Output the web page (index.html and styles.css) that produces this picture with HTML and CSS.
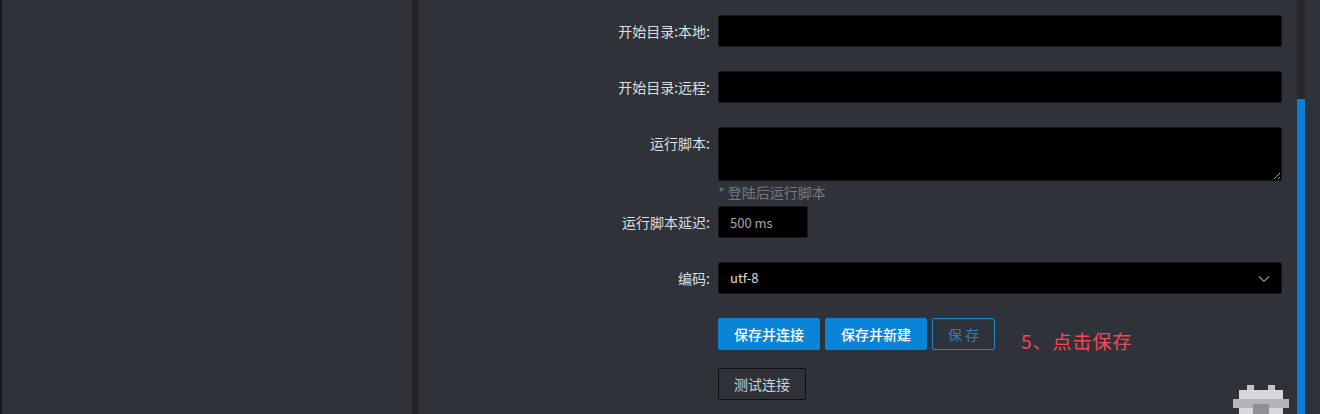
FILE: index.html
```html
<!DOCTYPE html>
<html>
<head>
    <meta charset="utf-8">
    <title>连接设置</title>
    <link rel="stylesheet" href="styles.css">
</head>
<body>
    <div class="app">
        <div class="edge"></div>
        <aside class="sidebar"></aside>
        <div class="splitter"></div>
        <main class="content">
            <form class="form">
                <div class="item">
                    <label class="label">开始目录:本地:</label>
                    <div class="control"><input class="input" type="text"></div>
                </div>
                <div class="item">
                    <label class="label">开始目录:远程:</label>
                    <div class="control"><input class="input" type="text"></div>
                </div>
                <div class="item item-hint">
                    <label class="label">运行脚本:</label>
                    <div class="control">
                        <textarea class="textarea"></textarea>
                        <div class="hint">* 登陆后运行脚本</div>
                    </div>
                </div>
                <div class="item">
                    <label class="label">运行脚本延迟:</label>
                    <div class="control"><input class="input input-short" type="text" placeholder="500 ms"></div>
                </div>
                <div class="item">
                    <label class="label">编码:</label>
                    <div class="control">
                        <div class="select">
                            <span class="select-value">utf-8</span>
                            <svg class="select-arrow" width="12" height="8" viewBox="0 0 12 8"><path d="M1 1.5 L6 6.5 L11 1.5" fill="none" stroke="#8a8d92" stroke-width="1.2"/></svg>
                        </div>
                    </div>
                </div>
                <div class="item item-buttons">
                    <div class="label"></div>
                    <div class="control buttons">
                        <button type="button" class="btn btn-primary">保存并连接</button>
                        <button type="button" class="btn btn-primary">保存并新建</button>
                        <button type="button" class="btn btn-outline">保 存</button>
                        <span class="note">5、点击保存</span>
                    </div>
                </div>
                <div class="item">
                    <div class="label"></div>
                    <div class="control"><button type="button" class="btn btn-default">测试连接</button></div>
                </div>
            </form>
            <div class="mosaic">
                <span class="m m1"></span><span class="m m2"></span>
                <span class="m m3"></span><span class="m m4"></span><span class="m m5"></span>
            </div>
        </main>
        <div class="scrollbar"><div class="thumb"></div></div>
        <div class="right-gap"></div>
    </div>
</body>
</html>
```

FILE: styles.css
```css
body{
    margin:0;
    background:#2f3339;
    font-family:"Noto Sans CJK SC","Liberation Sans",sans-serif;
    font-size:13px;
    color:#d6d7d9;
    overflow:hidden;
}
.app{
    display:flex;
    height:414px;
}
.edge{
    width:2px;
    background:#17191c;
}
.sidebar{
    width:410px;
    background:#2f3339;
}
.splitter{
    width:7px;
    background:#232529;
}
.content{
    position:relative;
    width:878px;
    padding-top:15px;
    box-sizing:border-box;
}
.item{
    display:grid;
    grid-template-columns:291px 564px;
    column-gap:8px;
    margin-bottom:24px;
}
.label{
    text-align:right;
    line-height:32px;
    height:32px;
    font-size:14px;
    color:#dcdddf;
    white-space:nowrap;
}
.input{
    display:block;
    box-sizing:border-box;
    width:100%;
    height:32px;
    background:#000;
    border:1px solid #16181b;
    border-radius:2px;
    outline:0;
    color:#ccc;
    padding:0 11px;
    font-family:inherit;
    font-size:13px;
}
.input::placeholder{
    color:#a3a5a8;
}
.input-short{
    width:90px;
}
.textarea{
    display:block;
    box-sizing:border-box;
    width:100%;
    height:54px;
    background:#000;
    border:1px solid #16181b;
    border-radius:2px;
    outline:0;
    color:#ccc;
    font-family:inherit;
    margin:0;
}
.item-hint{
    margin-bottom:5px;
}
.hint{
    font-size:14px;
    line-height:18px;
    color:#75787d;
    margin-top:2px;
}
.select{
    position:relative;
    box-sizing:border-box;
    height:32px;
    background:#000;
    border:1px solid #16181b;
    border-radius:2px;
    padding-left:11px;
    line-height:30px;
    color:#dcdcdc;
    font-size:13px;
}
.select-arrow{
    position:absolute;
    right:11px;
    top:12px;
}
.item-buttons{
    margin-top:1px;
    margin-bottom:18px;
}
.buttons{
    position:relative;
    display:flex;
    gap:5px;
}
.btn{
    box-sizing:border-box;
    height:32px;
    padding:0 15px;
    font-family:inherit;
    font-size:14px;
    border-radius:2px;
    cursor:pointer;
}
.btn-primary{
    background:#0a84d6;
    border:1px solid #0a84d6;
    color:#fff;
    font-weight:500;
}
.btn-outline{
    background:transparent;
    border:1px solid #1a88d0;
    color:#2f80b9;
}
.btn-default{
    background:transparent;
    border:1px solid #0d0e10;
    color:#cfd0d2;
}
.note{
    position:absolute;
    left:303px;
    top:11px;
    font-size:19px;
    line-height:24px;
    letter-spacing:1px;
    color:#f0475a;
    white-space:nowrap;
}
.scrollbar{
    width:8px;
    background:#26282c;
    display:flex;
    flex-direction:column;
    justify-content:flex-end;
}
.thumb{
    height:315px;
    background:#0a7fd4;
}
.right-gap{
    flex:1;
    background:#2f3339;
}
.mosaic{
    position:absolute;
    left:814px;
    top:385px;
    width:56px;
    height:29px;
}
.m{
    position:absolute;
    background:#cfd0d1;
}
.m1{ left:14px; top:0; width:7px; height:7px; background:#c4c5c7; }
.m2{ left:35px; top:0; width:7px; height:7px; background:#c4c5c7; }
.m3{ left:6px; top:5px; width:44px; height:24px; background:#d6d7d8; }
.m4{ left:0; top:14px; width:56px; height:9px; background:#b3b5b7; }
.m5{ left:20px; top:19px; width:16px; height:10px; background:#8e9194; }
```
